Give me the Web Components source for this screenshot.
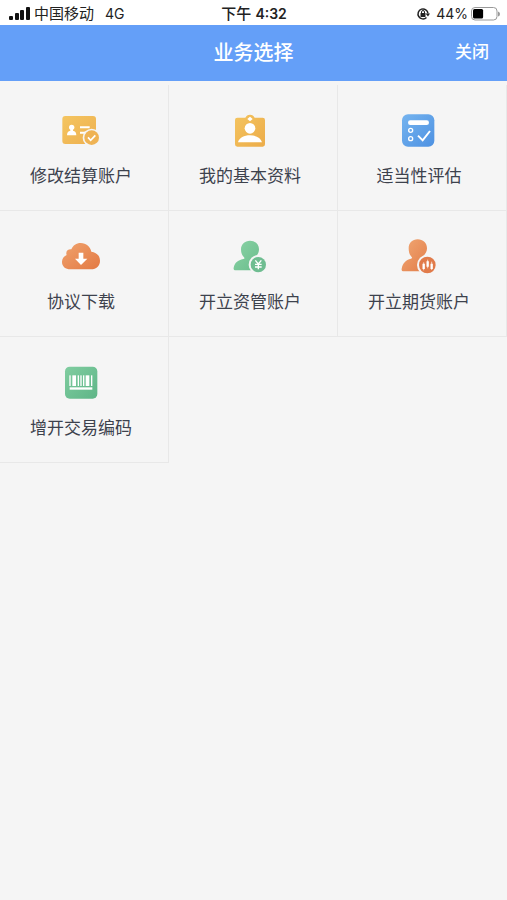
<!DOCTYPE html>
<html lang="zh-CN">
<head>
<meta charset="utf-8">
<meta name="viewport" content="width=device-width, initial-scale=1">
<title>业务选择</title>
<style>
    body {
        margin: 0;
        min-height: 100vh;
        background: #f5f5f5;
        color: #3d424d;
        font-family: "Liberation Sans", "Noto Sans CJK SC", sans-serif;
    }
</style>
</head>
<body>
<status-bar carrier="中国移动" network="4G" time="下午 4:32" battery="44"></status-bar>
<nav-bar>业务选择<button slot="action" type="button">关闭</button></nav-bar>
<service-grid>
    <service-item icon="card">修改结算账户</service-item>
    <service-item icon="profile">我的基本资料</service-item>
    <service-item icon="checklist">适当性评估</service-item>
    <service-item icon="cloud">协议下载</service-item>
    <service-item icon="user-yuan">开立资管账户</service-item>
    <service-item icon="user-futures">开立期货账户</service-item>
    <service-item icon="barcode">增开交易编码</service-item>
</service-grid>

<script>
    const gradient = (id, from, to) => `
      <defs>
        <linearGradient id="${id}" x1="0" y1="0" x2="1" y2="1">
          <stop offset="0" stop-color="${from}"/>
          <stop offset="1" stop-color="${to}"/>
        </linearGradient>
      </defs>`;

    const ICONS = {
        'card': `
          <svg viewBox="3 0 180 150" aria-hidden="true">
            ${gradient('g', '#f4c561', '#eeb04f')}
            <rect x="37" y="33" width="101" height="84" rx="9" fill="url(#g)"/>
            <circle cx="65" cy="67" r="8" fill="#fff"/>
            <path d="M61 72h8v5c6 1 10 5 10 14H51c0-9 4-13 10-14z" fill="#fff"/>
            <path d="M90 67h29M90 83h18" stroke="#fff" stroke-width="6"/>
            <circle cx="125" cy="98" r="27" fill="#f5f5f5"/>
            <circle cx="125" cy="98" r="22" fill="#efb354"/>
            <path d="M114 97l8 9 14-15" fill="none" stroke="#fff" stroke-width="5"/>
          </svg>`,
        'profile': `
          <svg viewBox="0 0 180 150" aria-hidden="true">
            ${gradient('g', '#f4c45f', '#ecac49')}
            <path fill="url(#g)" d="M52 38h24c3-6 7-9 14-9s11 3 14 9h24q7 0 7 7v73q0 7-7 7H52q-7 0-7-7V45q0-7 7-7z"/>
            <path d="M90 35l8 7-8 7-8-7z" fill="#fff"/>
            <circle cx="90" cy="70" r="16" fill="#fff"/>
            <path d="M54 112c4-14 18-21 36-21s32 7 36 21z" fill="#fff"/>
          </svg>`,
        'checklist': `
          <svg viewBox="-3 0 180 150" aria-hidden="true">
            ${gradient('g', '#75b4ef', '#4d91e2')}
            <rect x="36" y="28" width="97" height="97" rx="18" fill="url(#g)"/>
            <rect x="54" y="46" width="63" height="14" rx="7" fill="#fff"/>
            <g fill="none" stroke="#fff">
              <circle cx="62" cy="76" r="6" stroke-width="4"/>
              <circle cx="62" cy="101" r="6" stroke-width="4"/>
              <path d="M84 92l14 14 22-28" stroke-width="6"/>
            </g>
          </svg>`,
        'cloud': `
          <svg viewBox="3 3 180 150" aria-hidden="true">
            ${gradient('g', '#f0a36e', '#e37943')}
            <path fill="url(#g)" d="M61 118c-14 0-25-8-25-22 0-10 5-17 14-21-4-10 3-18 14-17 5-12 15-19 28-19 17 0 29 11 32 26 15 2 26 12 26 27 0 16-11 26-27 26z"/>
            <path d="M86 68h14v18h12L93 105 75 86h11z" fill="#fff"/>
          </svg>`,
        'user-yuan': `
          <svg viewBox="0 3 180 150" aria-hidden="true">
            ${gradient('g', '#8bd3a6', '#6abd8c')}
            <path fill="url(#g)" d="M90 32c16 0 27 11 27 26 0 11-6 19-13 25v38H48c-6 0-8-3-7-8 3-15 12-22 29-26 4-1 4-3 2-5-6-6-9-14-9-24 0-15 11-26 27-26z"/>
            <circle cx="115" cy="104" r="29" fill="#f5f5f5"/>
            <circle cx="115" cy="104" r="23" fill="#6fbd91"/>
            <path d="M106 91l9 11 9-11M115 102v16M105 103h20M105 111h20" fill="none" stroke="#fff" stroke-width="4"/>
          </svg>`,
        'user-futures': `
          <svg viewBox="-3 3 180 150" aria-hidden="true">
            ${gradient('g', '#f1a874', '#e27d49')}
            <path fill="url(#g)" d="M83 28c16 0 28 11 28 27 0 11-6 19-13 25v44H42c-6 0-8-3-7-8 3-17 12-26 28-30 4-1 4-3 2-5-6-6-9-14-9-26 0-16 11-27 27-27z"/>
            <circle cx="112" cy="105" r="31" fill="#f5f5f5"/>
            <circle cx="112" cy="105" r="25" fill="#e17b4a"/>
            <path d="M101 101v16M113 94v16M125 101v16" stroke="#fff" stroke-width="7"/>
            <path d="M101 97v24M113 89v26M125 95v25" stroke="#fff" stroke-width="2"/>
          </svg>`,
        'barcode': `
          <svg viewBox="3 -3 180 150" aria-hidden="true">
            ${gradient('g', '#80cda0', '#5eb587')}
            <rect x="45" y="26" width="97" height="96" rx="14" fill="url(#g)"/>
            <g fill="#fff">
              <rect x="58" y="52" width="4" height="32"/>
              <rect x="67" y="52" width="11" height="32"/>
              <rect x="83" y="52" width="4" height="32"/>
              <rect x="91" y="52" width="4" height="32"/>
              <rect x="99" y="52" width="4" height="32"/>
              <rect x="107" y="52" width="11" height="32"/>
              <rect x="123" y="52" width="4" height="32"/>
              <rect x="59" y="88" width="68" height="7"/>
            </g>
          </svg>`
    };

    class StatusBar extends HTMLElement {
        constructor () {
            super();
            this.attachShadow({ mode: 'open' });
        }

        connectedCallback () {
            const battery = this.getAttribute('battery');
            this.shadowRoot.innerHTML = `
              <style>
                :host {
                    display: grid;
                    grid-template-columns: 1fr auto 1fr;
                    align-items: center;
                    box-sizing: border-box;
                    height: 25px;
                    padding: 2px 7px 0 8px;
                    background: #fff;
                    color: #222;
                    font-size: 15px;
                    line-height: 22px;
                }
                svg { display: block; flex: none; }
                .side { display: flex; align-items: center; gap: 3px; }
                .end { justify-content: flex-end; }
                .time { font-weight: 500; }
                .time b { font-family: Inter, sans-serif; font-size: 14px; font-weight: 600; }
                .network, .level { font-family: Inter, sans-serif; font-size: 14px; }
                .network { margin-left: 8px; }
                .lock { margin-right: 3px; }
              </style>
              <div class="side">
                <svg width="23" height="14" viewBox="0 0 23 14" fill="#111" aria-hidden="true">
                  <rect x="1" y="9" width="4" height="4" rx="1"/>
                  <rect x="7" y="6" width="4" height="7" rx="1"/>
                  <rect x="12" y="3" width="4" height="10" rx="1"/>
                  <rect x="18" y="0" width="4" height="13" rx="1"/>
                </svg>
                <span>${this.getAttribute('carrier')}</span>
                <span class="network">${this.getAttribute('network')}</span>
              </div>
              <div class="time">${this.getAttribute('time').replace(/[\d:]+/, '<b>$&</b>')}</div>
              <div class="side end">
                <svg class="lock" width="14" height="14" viewBox="0 0 28 28" aria-hidden="true">
                  <path d="M21 21A10 10 0 1 1 24 13" fill="none" stroke="#222" stroke-width="3"/>
                  <path d="M19 13h9l-4 6z" fill="#222"/>
                  <rect x="9" y="12" width="10" height="8" rx="1" fill="#222"/>
                  <path d="M11 12v-2a3 3 0 0 1 6 0v2" fill="none" stroke="#222" stroke-width="2"/>
                </svg>
                <span class="level">${battery}%</span>
                <svg width="29" height="14" viewBox="0 0 58 28" aria-hidden="true">
                  <rect x="1" y="1" width="51" height="25" rx="7" fill="#fff" stroke="#999" stroke-width="2"/>
                  <rect x="4" y="4" width="${46 * battery / 100}" height="19" rx="3" fill="#000"/>
                  <path d="M54 9q4 1 4 5t-4 5z" fill="#999"/>
                </svg>
              </div>
            `;
        }
    }
    customElements.define('status-bar', StatusBar);

    class NavBar extends HTMLElement {
        constructor () {
            super();
            this.attachShadow({ mode: 'open' });
            this.shadowRoot.innerHTML = `
              <style>
                :host {
                    display: grid;
                    grid-template-columns: 1fr auto 1fr;
                    align-items: center;
                    box-sizing: border-box;
                    height: 56px;
                    padding: 0 18px;
                    background: #649ff8;
                    color: #fff;
                }
                h1 {
                    grid-column: 2;
                    margin: 0;
                    font-size: 20px;
                    font-weight: 500;
                    line-height: 28px;
                }
                ::slotted(button) {
                    justify-self: end;
                    padding: 0;
                    border: 0;
                    background: none;
                    color: inherit;
                    font: 500 17px/24px "Liberation Sans", "Noto Sans CJK SC", sans-serif;
                    cursor: pointer;
                }
              </style>
              <h1><slot></slot></h1>
              <slot name="action"></slot>
            `;
        }
    }
    customElements.define('nav-bar', NavBar);

    class ServiceGrid extends HTMLElement {
        constructor () {
            super();
            this.attachShadow({ mode: 'open' });
            this.shadowRoot.innerHTML = `
              <style>
                :host {
                    display: grid;
                    grid-template-columns: repeat(3, 1fr);
                    padding-top: 4px;
                }
              </style>
              <slot></slot>
            `;
        }
    }
    customElements.define('service-grid', ServiceGrid);

    class ServiceItem extends HTMLElement {
        constructor () {
            super();
            this.attachShadow({ mode: 'open' });
        }

        connectedCallback () {
            this.shadowRoot.innerHTML = `
              <style>
                :host { display: block; }
                button {
                    display: flex;
                    flex-direction: column;
                    align-items: center;
                    gap: 10px;
                    box-sizing: border-box;
                    width: 100%;
                    padding: 20px 6px 21px 0;
                    border: 0;
                    border-right: 1px solid #e8e8e8;
                    border-bottom: 1px solid #e8e8e8;
                    background: none;
                    color: inherit;
                    font: inherit;
                    font-size: 17px;
                    line-height: 24px;
                    cursor: pointer;
                }
                svg { display: block; width: 60px; height: 50px; }
              </style>
              <button type="button">
                ${ICONS[this.getAttribute('icon')]}
                <span><slot></slot></span>
              </button>
            `;
        }
    }
    customElements.define('service-item', ServiceItem);
</script>
</body>
</html>
